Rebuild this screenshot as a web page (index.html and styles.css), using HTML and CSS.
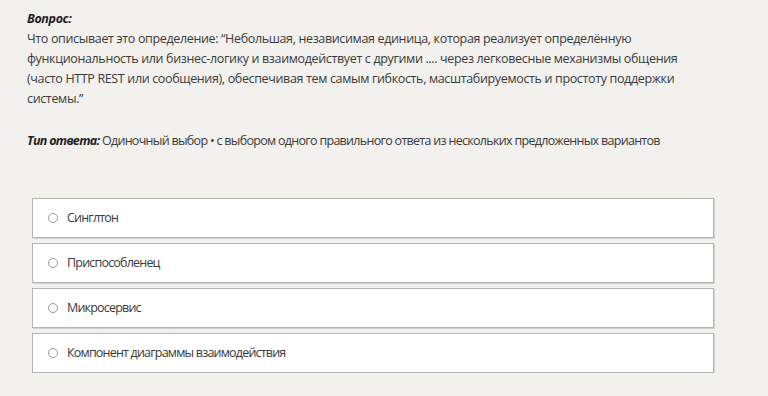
FILE: index.html
```html
<!DOCTYPE html>
<html lang="ru">
<head>
<meta charset="utf-8">
<link rel="stylesheet" href="styles.css">
</head>
<body>
<div class="page">
  <div class="question">
    <div class="label">Вопрос:</div>
    <div class="text">Что описывает это определение: “Небольшая, независимая единица, которая реализует определённую функциональность или бизнес-логику и взаимодействует с другими .... через легковесные механизмы общения (часто HTTP REST или сообщения), обеспечивая тем самым гибкость, масштабируемость и простоту поддержки системы.”</div>
  </div>
  <div class="type"><span class="label">Тип ответа:</span> Одиночный выбор • с выбором одного правильного ответа из нескольких предложенных вариантов</div>
  <div class="options">
    <div class="option"><span class="radio"></span><span>Синглтон</span></div>
    <div class="option"><span class="radio"></span><span>Приспособленец</span></div>
    <div class="option"><span class="radio"></span><span>Микросервис</span></div>
    <div class="option"><span class="radio"></span><span>Компонент диаграммы взаимодействия</span></div>
  </div>
</div>
</body>
</html>
```
FILE: styles.css
```css
html, body {
  margin: 0;
  padding: 0;
  background: #f2f1ee;
}
.page {
  padding: 9px 0 0 27px;
  font-family: "Open Sans", "Noto Sans", sans-serif;
  font-size: 12.5px;
  letter-spacing: -0.35px;
  line-height: 20px;
  color: #3a3a3a;
}
.label {
  font-weight: 700;
  font-style: italic;
  color: #1e1e1e;
}
.text {
  width: 662px;
}
.type {
  margin-top: 22px;
  letter-spacing: -0.7px;
}
.options {
  margin: 47px 0 0 5px;
  width: 682px;
  display: flex;
  flex-direction: column;
  gap: 5px;
  font-size: 12.5px;
  letter-spacing: -0.8px;
}
.option {
  box-sizing: border-box;
  height: 40px;
  background: #fff;
  border: 1px solid #b4b4b4;
  box-shadow: 1px 1px 0 #d2d2d2;
  display: flex;
  align-items: center;
  padding-left: 15px;
  gap: 9px;
}
.radio {
  box-sizing: border-box;
  width: 10px;
  height: 10px;
  border: 1px solid #9a9a9a;
  border-radius: 50%;
  background: #fff;
}
```
